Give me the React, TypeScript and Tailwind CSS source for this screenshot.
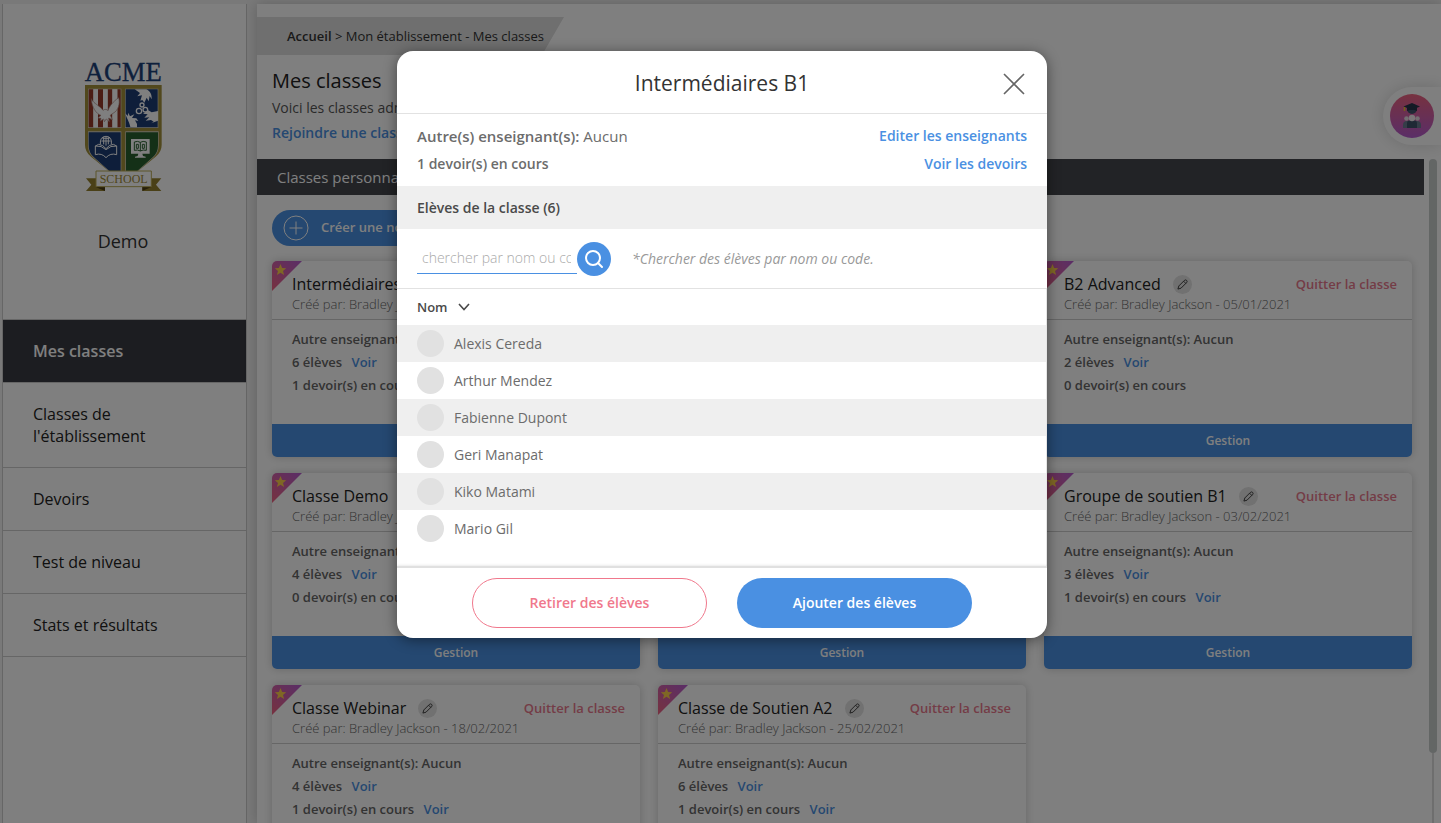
import { useState } from 'react';

interface SchoolClass {
  id: number;
  name: string;
  date: string;
  students: number;
  homework: number;
}

const navItems = ['Mes classes', "Classes de l'établissement", 'Devoirs', 'Test de niveau', 'Stats et résultats'];

const classes: SchoolClass[] = [
  { id: 1, name: 'Intermédiaires B1', date: '04/01/2021', students: 6, homework: 1 },
  { id: 2, name: 'Avancés C1', date: '04/01/2021', students: 5, homework: 0 },
  { id: 3, name: 'B2 Advanced', date: '05/01/2021', students: 2, homework: 0 },
  { id: 4, name: 'Classe Demo', date: '20/01/2021', students: 4, homework: 0 },
  { id: 5, name: 'Débutants A1', date: '01/02/2021', students: 5, homework: 0 },
  { id: 6, name: 'Groupe de soutien B1', date: '03/02/2021', students: 3, homework: 1 },
  { id: 7, name: 'Classe Webinar', date: '18/02/2021', students: 4, homework: 1 },
  { id: 8, name: 'Classe de Soutien A2', date: '25/02/2021', students: 6, homework: 1 },
];

const students = ['Alexis Cereda', 'Arthur Mendez', 'Fabienne Dupont', 'Geri Manapat', 'Kiko Matami', 'Mario Gil'];

function SchoolLogo() {
  return (
    <svg viewBox="42 33 231 390" className="h-[130px] w-[77px] overflow-visible" role="img" aria-label="Acme School">
      <text x="157" y="92" textAnchor="middle" fontSize="80" fill="#1c4078" stroke="#1c4078" strokeWidth="1" fontFamily="Liberation Serif, serif">ACME</text>
      <path d="M42 105H272V285Q272 306 254 320L200 364H114L60 320Q42 306 42 285Z" fill="#a3913a" />
      <path d="M51 116H151V234H51Z" fill="#d8d4c8" />
      <path d="M53 118H67V232H53ZM81 118H96V232H81ZM110 118H124V232H110ZM139 118H149V232H139Z" fill="#963828" />
      <path d="M67 118H81V232H67ZM96 118H110V232H96ZM124 118H139V232H124Z" fill="#fff" />
      <path d="M61 146C64 157 80 164 90 174L96 181C102 176 108 178 111 182C114 170 126 155 143 143C148 160 142 182 126 190C122 193 119 194 118 196L124 209L113 204L115 215L106 207L100 215L98 207L88 213L90 205L81 204L90 196C76 192 62 172 61 146Z" fill="#fff" stroke="#a88078" strokeWidth="2" />
      <path d="M162 116H262V234H162Z" fill="#d8d4c8" />
      <path d="M164 118H260V232H164Z" fill="#1c3c74" />
      <path d="M191 118H226C238 124 243 134 242 148L236 138L233 154L227 143L220 158L214 150L208 152L213 136L199 139L207 129Z" fill="#fff" />
      <path d="M178 231C174 212 166 205 163 190L170 198L172 188L177 199L190 193L183 204L196 205L202 213L192 211L198 222V232Z" fill="#fff" />
      <path d="M261 183L242 187L232 181L216 191L230 193L220 203L235 202L224 212L240 210L248 215L240 220L261 212Z" fill="#fff" />
      <g fill="none" stroke="#fff" strokeWidth="4">
        <circle cx="213" cy="165" r="6" />
        <circle cx="204" cy="183" r="8" />
        <circle cx="223" cy="179" r="7" />
      </g>
      <path d="M51 244H151V364H114L66 322Q51 308 51 286Z" fill="#d8d4c8" />
      <path d="M53 247H149V364H116L68 321Q53 308 53 286Z" fill="#1c3c74" />
      <g fill="none" stroke="#fff" strokeWidth="3">
        <path d="M88 283Q86 259 105 259Q124 259 121 283M91 273H119M94 265H116M98 283V261M105 287V259M112 283V261" />
        <path d="M73 288V314Q92 308 105 323Q118 308 137 314V288M73 288L83 283Q96 284 105 296Q114 284 127 283L137 288Q118 286 105 299Q92 286 73 288Z" />
      </g>
      <path d="M163 244H263V286Q263 308 248 322L200 364H163Z" fill="#d8d4c8" />
      <path d="M165 247H261V286Q261 308 246 321L198 364H165Z" fill="#28602f" />
      <path d="M180 267H236V311H180ZM202 311H214L216 318L224 320V323H192V320L200 318Z" fill="#fff" />
      <path d="M190 276Q200 272 208 277Q216 272 226 276V301Q216 298 208 303Q200 298 190 301ZM208 277V303M196 283H202V295H196ZM214 283H220V295H214Z" fill="none" stroke="#28602f" strokeWidth="3" />
      <path d="M45 385H102V423H45L61 404ZM271 385H214V423H271L255 404Z" fill="#95812f" />
      <path d="M74 411H102V423ZM241 411H214V423Z" fill="#4c3d12" />
      <path d="M75 363H241V410H75Z" fill="#fff" stroke="#b8a955" strokeWidth="3" />
      <text x="158" y="399" textAnchor="middle" fontSize="36" fill="#9c8a38" fontFamily="Liberation Serif, serif">SCHOOL</text>
    </svg>
  );
}

function PencilIcon() {
  return (
    <svg viewBox="0 0 12 12" className="h-[11px] w-[11px]" fill="none" stroke="#333" strokeWidth="1" strokeLinejoin="round">
      <path d="M1 11L2 7.6L8 1.6Q9.3 .4 10.5 1.5Q11.6 2.7 10.4 4L4.4 10ZM7.2 2.4L9.6 4.8" />
    </svg>
  );
}

function TutorBadge() {
  return (
    <button type="button" aria-label="Espace élèves" className="absolute right-0 top-[87px] flex h-[58px] w-[58px] items-center rounded-l-full bg-white pl-[7px] shadow-[0_0_16px_rgba(0,0,0,0.15)]">
      <svg viewBox="0 0 44 44" className="h-11 w-11">
        <defs>
          <linearGradient id="badge" x1="0" y1="0" x2="0" y2="1">
            <stop offset="0" stopColor="#ee6480" />
            <stop offset="1" stopColor="#b55ccf" />
          </linearGradient>
        </defs>
        <circle cx="22" cy="22" r="22" fill="url(#badge)" />
        <circle cx="22" cy="15" r="5" fill="#3f526b" />
        <path d="M22 9L30 12.500L22 16L13.500 12.500Z" fill="#27344a" />
        <path d="M17 13H27V17Q22 14.500 17 17Z" fill="#27344a" />
        <path d="M14.500 13V17" stroke="#e8c030" strokeWidth="1.500" />
        <path d="M13 34V31Q13 27 17 27H27Q31 27 31 31V34Z" fill="#6b7b90" />
        <path d="M17 34V29Q17 26 22 26Q27 26 27 29V34Z" fill="#3f526b" />
        <circle cx="16.500" cy="24.500" r="2.300" fill="#e6dce2" />
        <circle cx="27.500" cy="24.500" r="2.300" fill="#e6dce2" />
        <circle cx="22" cy="24" r="3.200" fill="#f4edf0" />
      </svg>
    </button>
  );
}

function Sidebar() {
  return (
    <aside className="ml-0.5 mt-1 flex w-[245px] shrink-0 flex-col border-x border-[#ccc] bg-white">
      <div className="flex h-[315px] flex-col items-center pr-[3px] pt-[57px]">
        <SchoolLogo />
        <p className="mt-9 text-lg leading-7 text-[#333]">Demo</p>
      </div>
      <nav className="border-t border-[#ccc]">
        {navItems.map((item, i) => (
          <a
            key={item}
            href="#"
            className={`block border-b border-[#ccc] py-5 pl-[30px] pr-16 text-base leading-[22px] ${
              i === 0 ? 'bg-[#383a42] font-semibold text-white' : 'font-medium text-[#222]'
            }`}
          >
            {item}
          </a>
        ))}
      </nav>
    </aside>
  );
}

function ClassCard({ item }: { item: SchoolClass }) {
  return (
    <article className="relative flex h-[196px] flex-col overflow-hidden rounded-[5px] bg-white shadow-[0_0_10px_rgba(0,0,0,0.2)]">
      <svg viewBox="0 0 30 30" className="absolute left-0 top-0 h-[30px] w-[30px]">
        <defs>
          <linearGradient id={`corner${item.id}`} x1="0" y1="1" x2="1" y2="0">
            <stop offset="0" stopColor="#ee6480" />
            <stop offset="1" stopColor="#b55ccf" />
          </linearGradient>
        </defs>
        <path d="M0 0H30L0 30Z" fill={`url(#corner${item.id})`} />
        <path d="M8.500 3L10.100 7L14.200 7.200L11 9.900L12.100 14L8.500 11.700L4.900 14L6 9.900L2.800 7.200L6.900 7Z" fill="#ffcf4a" />
      </svg>
      <header className="h-[59px] border-b border-[#ccc] pl-5 pr-[15px] pt-3">
        <div className="flex h-[22px] items-center">
          <h3 className="text-base font-medium text-[#222]">{item.name}</h3>
          <button type="button" aria-label="Modifier le nom" className="ml-3 flex h-[19px] w-[19px] items-center justify-center rounded-full bg-[#e2e2e2]">
            <PencilIcon />
          </button>
          <button type="button" className="ml-auto pt-0.5 text-[13px] font-semibold text-[#e8798d]">Quitter la classe</button>
        </div>
        <p className="text-[13px] leading-[18px] font-light text-[#666]">Créé par: Bradley Jackson - {item.date}</p>
      </header>
      <div className="flex-1 pl-5 pt-2 text-[13px] leading-[23px] font-semibold text-[#666]">
        <p>Autre enseignant(s): Aucun</p>
        <p>{item.students} élèves <a href="#" className="ml-1.5 text-[#4a90e2]">Voir</a></p>
        <p>
          {item.homework} devoir(s) en cours {item.homework > 0 && <a href="#" className="ml-1.5 text-[#4a90e2]">Voir</a>}
        </p>
      </div>
      <button type="button" className="h-[33px] bg-[#4a90e2] text-xs font-semibold text-white">Gestion</button>
    </article>
  );
}

function ClassesPage() {
  return (
    <main className="ml-2.5 mt-1 flex min-w-0 flex-1 flex-col bg-white shadow-[0_0_12px_rgba(0,0,0,0.2)]">
      <nav aria-label="Fil d'Ariane" className="mt-[13px] flex h-[38px] w-[307px] items-center bg-[#dedede] pl-[30px] pt-0.5 text-[13px] text-[#333] [clip-path:polygon(0_0,100%_0,calc(100%-22px)_100%,0_100%)]">
        <a href="#" className="font-semibold">Accueil</a>
        <span className="whitespace-pre"> &gt; Mon établissement - Mes classes</span>
      </nav>
      <div className="h-[104px] pl-[15px] pt-3">
        <h1 className="text-xl leading-7 font-medium text-[#222]">Mes classes</h1>
        <p className="text-sm leading-[25px] text-[#555]">Voici les classes administrées par vous.</p>
        <a href="#" className="text-sm leading-[25px] font-semibold text-[#4a90e2]">Rejoindre une classe</a>
      </div>
      <div className="flex min-h-0 flex-1 overflow-hidden">
        <div className="min-w-0 flex-1">
          <h2 className="flex h-9 items-center bg-[#44464d] pl-5 text-[15px] text-white">Classes personnalisées</h2>
          <div className="pb-4 pl-[15px] pr-3 pt-[15px]">
            <button type="button" className="flex h-9 items-center rounded-full bg-[#4a90e2] pl-[11px] pr-6 text-[13px] font-semibold text-white">
              <svg viewBox="0 0 26 26" className="mr-3 h-[26px] w-[26px]" fill="none" stroke="#fff">
                <circle cx="13" cy="13" r="12" />
                <path d="M13 6.500V19.500M6.500 13H19.500" />
              </svg>
              Créer une nouvelle classe
            </button>
            <div className="mt-[15px] grid grid-cols-3 gap-x-[18px] gap-y-4">
              {classes.map((item) => <ClassCard key={item.id} item={item} />)}
            </div>
          </div>
        </div>
        <div className="ml-[5px] mr-1 flex w-2 flex-col items-center">
          <div className="h-[594px] w-2 shrink-0 rounded-full bg-[#c7cccb]" />
          <div className="w-0.5 flex-1 bg-[#dcdcdc]" />
        </div>
      </div>
    </main>
  );
}

function StudentsDialog({ onClose }: { onClose: () => void }) {
  const [query, setQuery] = useState('');

  return (
    <div role="dialog" aria-modal="true" aria-labelledby="dialog-title" className="w-[650px] overflow-hidden rounded-2xl bg-white text-sm text-[#6c6c6c] shadow-[0_2px_14px_rgba(0,0,0,0.45)]">
      <header className="relative flex h-[63px] items-center justify-center border-b border-[#e2e2e2] pt-0.5">
        <h2 id="dialog-title" className="text-[21px] text-[#333]">Intermédiaires B1</h2>
        <button type="button" aria-label="Fermer" onClick={onClose} className="absolute right-[22px] top-[22px]">
          <svg viewBox="0 0 22 22" className="h-[22px] w-[22px]" stroke="#666" strokeWidth="1.6">
            <path d="M1 1L21 21M21 1L1 21" />
          </svg>
        </button>
      </header>
      <div className="flex h-[72px] justify-between px-5 pt-2 leading-7 font-semibold">
        <div>
          <p className="text-[15px] leading-7">Autre(s) enseignant(s): <span className="font-normal">Aucun</span></p>
          <p>1 devoir(s) en cours</p>
        </div>
        <div className="flex flex-col items-end text-[#4a90e2]">
          <a href="#">Editer les enseignants</a>
          <a href="#">Voir les devoirs</a>
        </div>
      </div>
      <h3 className="flex h-[43px] items-center bg-[#efefef] px-5 font-semibold text-[#4a4a4a]">Elèves de la classe (6)</h3>
      <form onSubmit={(e) => e.preventDefault()} className="flex h-[60px] items-center border-b border-[#e2e2e2] px-5">
        <input
          type="text"
          aria-label="Chercher des élèves"
          value={query}
          onChange={(e) => setQuery(e.target.value)}
          placeholder="chercher par nom ou code"
          className="h-[31px] w-40 border-b border-[#4a90e2] pb-0.5 pl-[5px] pr-1.5 font-light outline-none placeholder:text-[#aaa]"
        />
        <button type="submit" aria-label="Chercher" className="flex h-[34px] w-[34px] items-center justify-center rounded-full bg-[#4a90e2]">
          <svg viewBox="0 0 20 20" className="h-5 w-5" fill="none" stroke="#fff" strokeWidth="2" strokeLinecap="round">
            <circle cx="9" cy="9" r="7" />
            <path d="M14 14L18 18" />
          </svg>
        </button>
        <span className="ml-[21px] text-[#999] italic">*Chercher des élèves par nom ou code.</span>
      </form>
      <div className="border-r border-[#e6e6e6] pb-[19px]">
        <table className="w-full">
          <thead>
            <tr className="h-9 text-left text-[13px] text-[#4a4a4a]">
              <th className="pl-5 font-semibold">
                <button type="button" className="flex items-center gap-2.5">
                  Nom
                  <svg viewBox="0 0 12 8" className="h-2 w-3" fill="none" stroke="#4a4a4a" strokeWidth="1.6">
                    <path d="M1 1L6 6.500L11 1" />
                  </svg>
                </button>
              </th>
            </tr>
          </thead>
          <tbody>
            {students.map((name) => (
              <tr key={name} className="h-[37px] odd:bg-[#efefef]">
                <td className="pl-5">
                  <div className="flex items-center gap-2.5">
                    <span className="h-[27px] w-[27px] rounded-full bg-[#e1e1e1]" />
                    {name}
                  </div>
                </td>
              </tr>
            ))}
          </tbody>
        </table>
      </div>
      <footer className="flex h-[72px] items-center justify-center gap-[30px] border-t-2 border-[#e0e0e0] font-semibold shadow-[0_0_3px_rgba(0,0,0,0.15)]">
        <button type="button" className="h-[50px] w-[235px] rounded-full border border-[#f0788c] text-[#f0788c]">Retirer des élèves</button>
        <button type="button" className="h-[50px] w-[235px] rounded-full bg-[#4a90e2] text-white">Ajouter des élèves</button>
      </footer>
    </div>
  );
}

export default function App() {
  const [open, setOpen] = useState(true);

  return (
    <div className="relative flex h-screen overflow-hidden bg-[#f2f2f2] font-['Open_Sans',sans-serif]">
      <Sidebar />
      <ClassesPage />
      <TutorBadge />
      {open && (
        <div className="absolute inset-0 flex items-start justify-center bg-black/50 pl-[3px] pt-[51px]">
          <StudentsDialog onClose={() => setOpen(false)} />
        </div>
      )}
    </div>
  );
}
